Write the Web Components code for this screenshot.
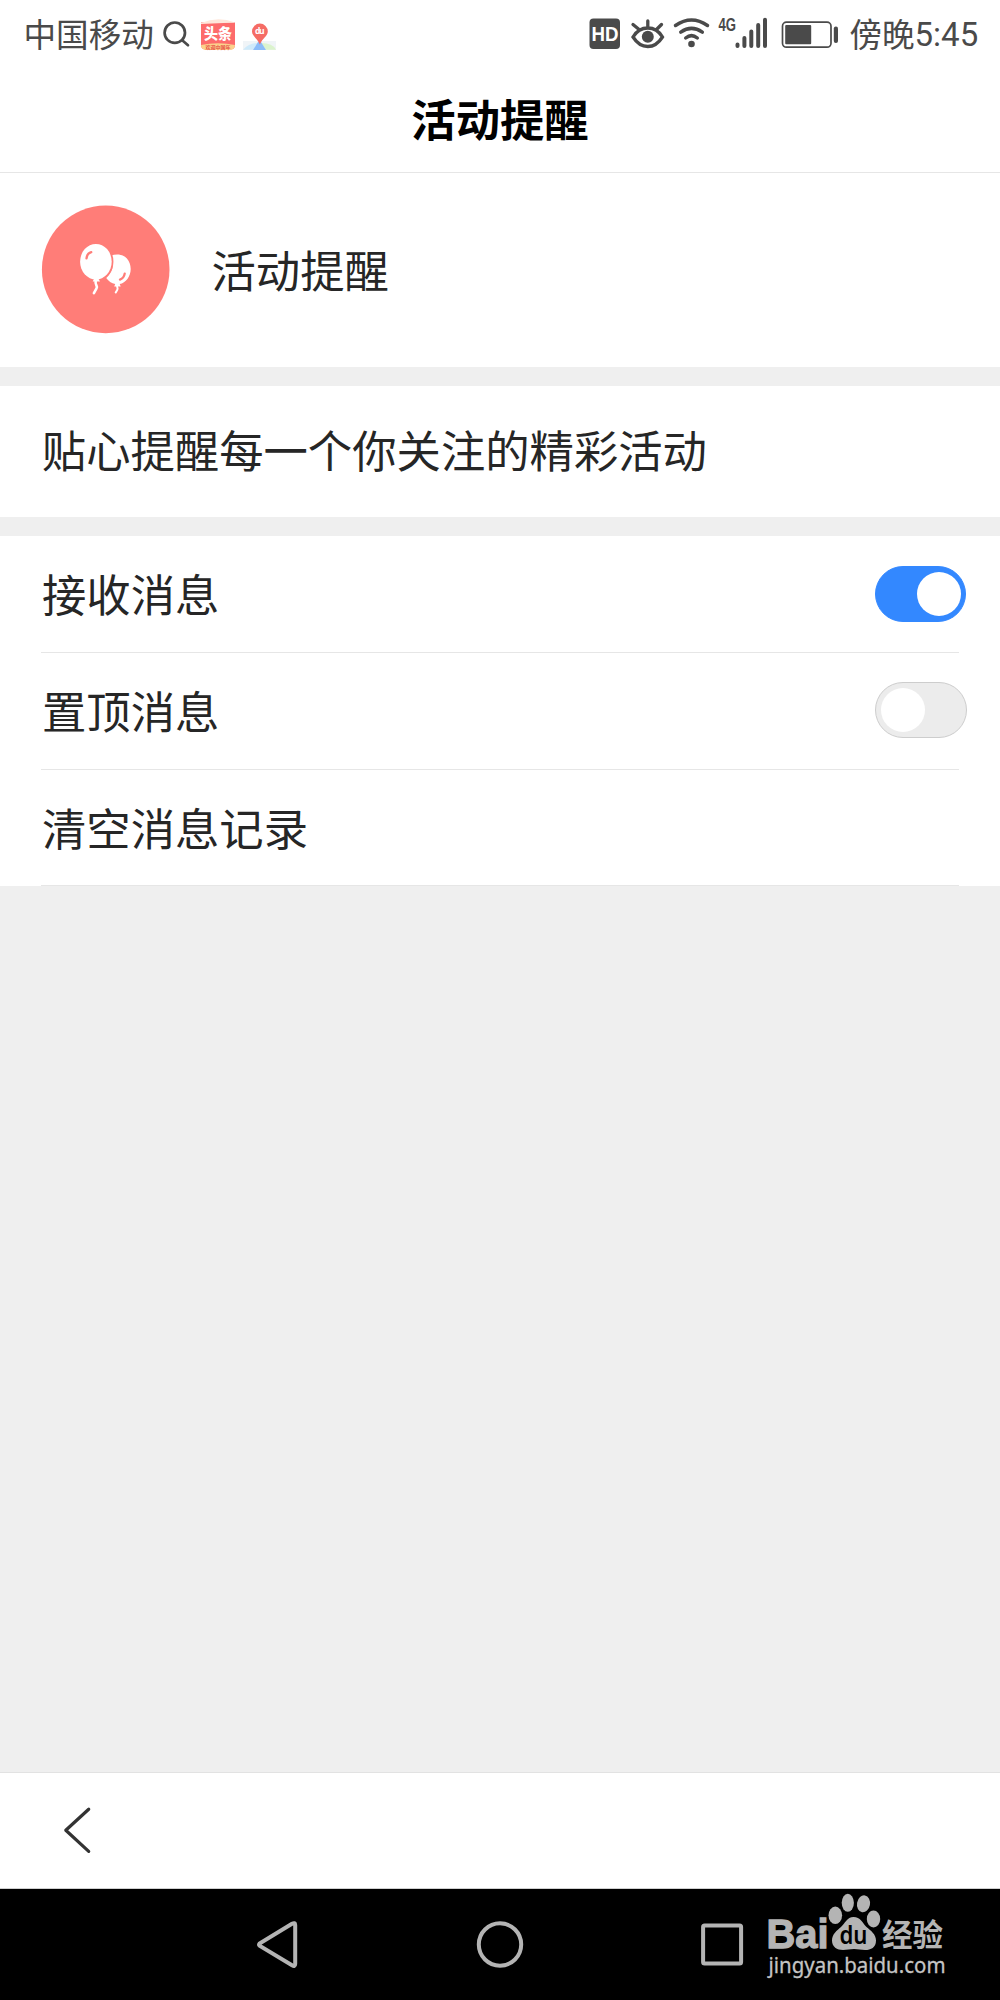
<!DOCTYPE html>
<html lang="zh-CN">
<head>
<meta charset="utf-8">
<title>活动提醒</title>
<style>
html,body{margin:0;padding:0}
body{width:1000px;height:2000px;overflow:hidden;background:#efefef;font-family:"Noto Sans CJK SC",sans-serif;color:#262626}
</style>
</head>
<body>
<phone-screen>
  <status-bar></status-bar>
  <page-title>活动提醒</page-title>
  <profile-card>活动提醒</profile-card>
  <info-card>贴心提醒每一个你关注的精彩活动</info-card>
  <setting-list>
    <setting-row>接收消息<toggle-switch slot="control" on></toggle-switch></setting-row>
    <setting-row>置顶消息<toggle-switch slot="control"></toggle-switch></setting-row>
    <setting-row>清空消息记录</setting-row>
  </setting-list>
  <back-bar slot="bottom"></back-bar>
  <system-nav slot="bottom"></system-nav>
</phone-screen>
<script>
function define(name, html) {
  const t = document.createElement('template');
  t.innerHTML = html;
  customElements.define(name, class extends HTMLElement {
    constructor() {
      super();
      this.attachShadow({mode: 'open'}).appendChild(t.content.cloneNode(true));
    }
  });
}

define('phone-screen', `<style>
:host{display:flex;flex-direction:column;width:1000px;height:2000px;background:#efefef}
main{flex:1;min-height:0}
</style><main><slot></slot></main><slot name="bottom"></slot>`);

define('status-bar', `<style>
:host{display:flex;align-items:flex-start;height:70px;background:#fff;color:#4a4a4a;box-sizing:border-box;padding-left:23.5px}
span{font-size:32.6px;line-height:48px;margin-top:8.5px;white-space:nowrap}
.time{margin-left:6.5px;display:flex}
.time b{font:400 33px/48px Roboto,sans-serif;margin-top:2px}
.carrier{width:130.5px}
svg{display:block;flex:none}
.gap{flex:1}
.right{width:277px}
</style>
<span class="carrier">中国移动</span>
<svg width="126" height="70" viewBox="154 0 126 70">
  <g fill="none" stroke="#4a4a4a" stroke-width="2.7" stroke-linecap="round"><circle cx="174.8" cy="32.7" r="10.2"/><path d="M182.2 40.2 188 45.2"/></g>
  <path d="M201 22.5Q218 22 235 22.5V45Q235 49.5 230 49.5H206Q201 49.5 201 45Z" fill="#fd6b6b"/>
  <path d="M201 23Q218 16 235 22.5L201 24Z" fill="#fee7db"/>
  <path d="M201 45Q218 41.5 235 45Q235 50 229 50H207Q201 50 201 45Z" fill="#fbd28c"/>
  <text x="204" y="38.7" font-size="15" font-weight="900" fill="#fff" textLength="28" lengthAdjust="spacingAndGlyphs" font-family="Noto Sans CJK SC">头条</text>
  <text x="205.5" y="49" font-size="5" font-weight="700" fill="#e65147" textLength="25" font-family="Noto Sans CJK SC">欢迎中国年</text>
  <path d="M243 41H276V50H243Z" fill="#f0f4f7"/>
  <path d="M243 49.8Q249 43 258 43L253 49.8Z" fill="#cfeafa"/><path d="M261 43Q273 43 276 49.8H266Z" fill="#dbf3cd"/>
  <path d="M258 42H261L266 50H253Z" fill="#8bbcf8"/>
  <path d="M252 31.5a7.9 7.9 0 1 1 15.8 0c0 4.5-5.2 6.5-7.9 13-2.7-6.5-7.9-8.5-7.9-13Z" fill="#f56c65"/>
  <text x="255" y="34.2" font-family="Open Sans" font-weight="700" font-size="8.5" textLength="9.5" fill="#fff">du</text>
</svg>
<div class="gap"></div>
<svg class="right" height="70" viewBox="565.500 0 277 70">
  <rect x="589" y="18.5" width="30.5" height="30.5" rx="4" fill="#4a4a4a"/>
  <text x="591" y="41" font-family="Liberation Sans" font-weight="700" font-size="20" fill="#fff" textLength="27" lengthAdjust="spacingAndGlyphs">HD</text>
  <g fill="none" stroke="#4a4a4a" stroke-width="3.3" stroke-linecap="round">
    <path d="M632.5 37Q638 28 647.3 28T662 37Q656 46.5 647.3 46.5T632.5 37ZM647.3 27V21M638 29 632.5 24.5M656.5 29 661 24.5"/>
  </g>
  <circle cx="647.3" cy="36.7" r="6" fill="#4a4a4a"/>
  <g fill="none" stroke="#4a4a4a" stroke-width="3.5" stroke-linecap="round">
    <path d="M675 25.5Q691 14.5 707 25.5M680.3 32.2Q691 24.5 701.8 32.2M685.2 38Q691 33.3 696.8 38"/>
  </g><circle cx="691" cy="44" r="3.3" fill="#4a4a4a"/>
  <text x="718" y="31.2" font-family="Liberation Sans" font-weight="700" font-size="18.5" fill="#4a4a4a" textLength="17.5" lengthAdjust="spacingAndGlyphs">4G</text>
  <g stroke="#4a4a4a" stroke-width="4" stroke-linecap="round"><path d="M737 44.5V46M743.9 38V46M750.8 31.5V46M757.7 25V46M764.5 19.7V46"/></g>
  <rect x="782" y="22.2" width="48.5" height="25" rx="4" fill="none" stroke="#4a4a4a" stroke-width="1.7"/>
  <rect x="784.7" y="25" width="26" height="19.3" rx="1" fill="#4a4a4a"/>
  <rect x="833.3" y="26.5" width="4.2" height="16.5" rx="2" fill="#4a4a4a"/>
</svg>
<span class="time">傍晚<b>5:45</b></span>
<div style="width:21.8px;flex:none"></div>`);

define('page-title', `<style>
:host{display:flex;justify-content:center;height:103px;box-sizing:border-box;padding-top:16px;background:#fff;border-bottom:1px solid #e6e6e6;color:#000;font-size:44.35px;font-weight:700;line-height:64px}
</style><slot></slot>`);

define('profile-card', `<style>
:host{display:flex;align-items:flex-start;height:194px;background:#fff;box-sizing:border-box;padding:32px 0 0 41px;font-size:44.35px;line-height:64px}
svg{display:block;margin-right:41.5px}
span{margin-top:32px}
</style>
<svg width="129" height="129" viewBox="-.7 -.4 129 129">
  <circle cx="64" cy="64" r="63.800" fill="#ff7d78"/>
  <g fill="#fff">
    <path d="M75.500 49c8 0 13.500 6 13.500 14.500 0 7.500-5 14-11 15l1 2.500h-6.500l1-2.500c-3.500-.6-7-3-9-6C70 68 74 59 69.500 50Q72 49 75.500 49Z"/>
    <ellipse cx="54.200" cy="56" rx="17.500" ry="19.800" fill="#ff7d78"/>
    <ellipse cx="54.200" cy="56.300" rx="15.800" ry="17.800"/>
    <path d="M53 72h3l2.300 4H51Z"/>
  </g>
  <g fill="none" stroke-linecap="round" stroke="#fff">
    <path d="M54 76c-1 4 2.500 4 .8 7l-2.600 4.800" stroke-width="2.600"/><path d="M75.500 79c-1 4 1.500 3 0 5.500l-1.500 2.500" stroke-width="2"/>
    <g stroke="#ff7d78" stroke-width="2.300"><path d="M44.800 53c.3-3.500 2.200-5.500 4.800-6.200M83 68.200c-.5 3-2 5-4.700 6"/></g>
  </g>
</svg><span><slot></slot></span>`);

define('info-card', `<style>
:host{display:block;height:131px;margin:19px 0;background:#fff;box-sizing:border-box;padding:30.5px 0 0 41.8px;font-size:44.35px;line-height:64px}
</style><slot></slot>`);

define('setting-list', `<style>
:host{display:block;background:#fff;height:350px}
</style><slot></slot>`);

define('setting-row', `<style>
:host{display:flex;height:117px;padding-left:41px}
:host(:last-of-type){height:116px}
.body{flex:1;display:flex;justify-content:space-between;border-bottom:1px solid #e6e6e6;box-sizing:border-box;margin-right:41px;font-size:44.35px}
span{line-height:64px;margin-top:25px;padding-left:1px}
.control{margin:29px -8px 0 0}
</style><div class="body"><span><slot></slot></span><div class="control"><slot name="control"></slot></div></div>`);

define('toggle-switch', `<style>
:host{display:flex;align-items:center;box-sizing:border-box;width:92px;height:56px;border-radius:28px;background:#ececec;border:1px solid #cdcdcd;padding:0 5px}
:host([on]){background:#3388ff;border-color:#3388ff;justify-content:flex-end;width:91px;margin:.5px 1px 0 0;padding-right:4px}
i{display:block;width:44px;height:44px;border-radius:50%;background:#fff}
</style><i></i>`);

define('back-bar', `<style>
:host{display:flex;align-items:center;height:117px;box-sizing:border-box;background:#fff;border-top:1px solid #e2e2e2;border-bottom:1px solid #cfcfcf;padding-left:60px}
svg{display:block}
</style><svg width="36" height="60" viewBox="60 1800.700 36 60"><path d="M88.700 1808.900 65.800 1830 88.700 1851.100" fill="none" stroke="#333" stroke-width="3.200" stroke-linecap="round" stroke-linejoin="round"/></svg>`);

define('system-nav', `<style>
:host{display:flex;height:111px;background:#000}
svg{display:block;flex:none}
.back{margin-left:250px}.home{margin-left:170px}.recent{margin-left:170px}
.mark{margin-left:12px}
</style>
<svg class="back" width="54" height="111" viewBox="250 1889 54 111"><path d="M259.500 1943.600Q258.500 1944.700 259.500 1945.600L292 1965.300Q295.200 1967 295.200 1964V1925Q295.200 1922 292 1923.800Z" fill="none" stroke="#b4b4b4" stroke-width="4"/></svg>
<svg class="home" width="52" height="111" viewBox="474 1889 52 111"><circle cx="500" cy="1944.500" r="21.200" fill="none" stroke="#b4b4b4" stroke-width="4"/></svg>
<svg class="recent" width="52" height="111" viewBox="696 1889 52 111"><rect x="703.100" y="1925.400" width="38" height="38" rx="1.500" fill="none" stroke="#b4b4b4" stroke-width="4"/></svg>
<svg class="mark" width="240" height="111" viewBox="760 1889 240 111">
  <g fill="#b4b4b4">
    <text x="766.500" y="1948.300" font-family="Liberation Sans" font-weight="700" font-size="41" stroke="#b4b4b4" stroke-width="1.300" textLength="62" lengthAdjust="spacingAndGlyphs">Bai</text>
    <ellipse cx="835.300" cy="1915.300" rx="6.800" ry="8.700"/>
    <ellipse cx="847.800" cy="1902.800" rx="6.100" ry="9"/>
    <ellipse cx="863.500" cy="1903.800" rx="6.500" ry="8.500" transform="rotate(10 863.500 1903.800)"/>
    <ellipse cx="873.500" cy="1919" rx="6.700" ry="8.500"/>
    <path d="M853.500 1917c7 0 9 6 13 10 4 3.500 9.500 7 9.500 13.500 0 7-5 9.500-11 9.500-4 0-7-1-11-1s-7 1-11 1c-6 0-11-3-11-9.500s5-10 9-13.500 6-10 12.500-10Z"/>
    <text x="882" y="1946" font-family="Noto Sans CJK SC" font-weight="700" font-size="30.500" textLength="61">经验</text>
  </g>
  <text x="839.500" y="1944.300" font-family="Noto Sans" font-weight="600" font-size="25" fill="#000" textLength="28" lengthAdjust="spacingAndGlyphs">du</text>
  <text x="768.500" y="1972.500" font-family="Noto Sans" font-size="21.500" fill="#c4c4c4" stroke="#c4c4c4" stroke-width=".3" textLength="177" lengthAdjust="spacingAndGlyphs">jingyan.baidu.com</text>
</svg>`);
</script>
</body>
</html>
